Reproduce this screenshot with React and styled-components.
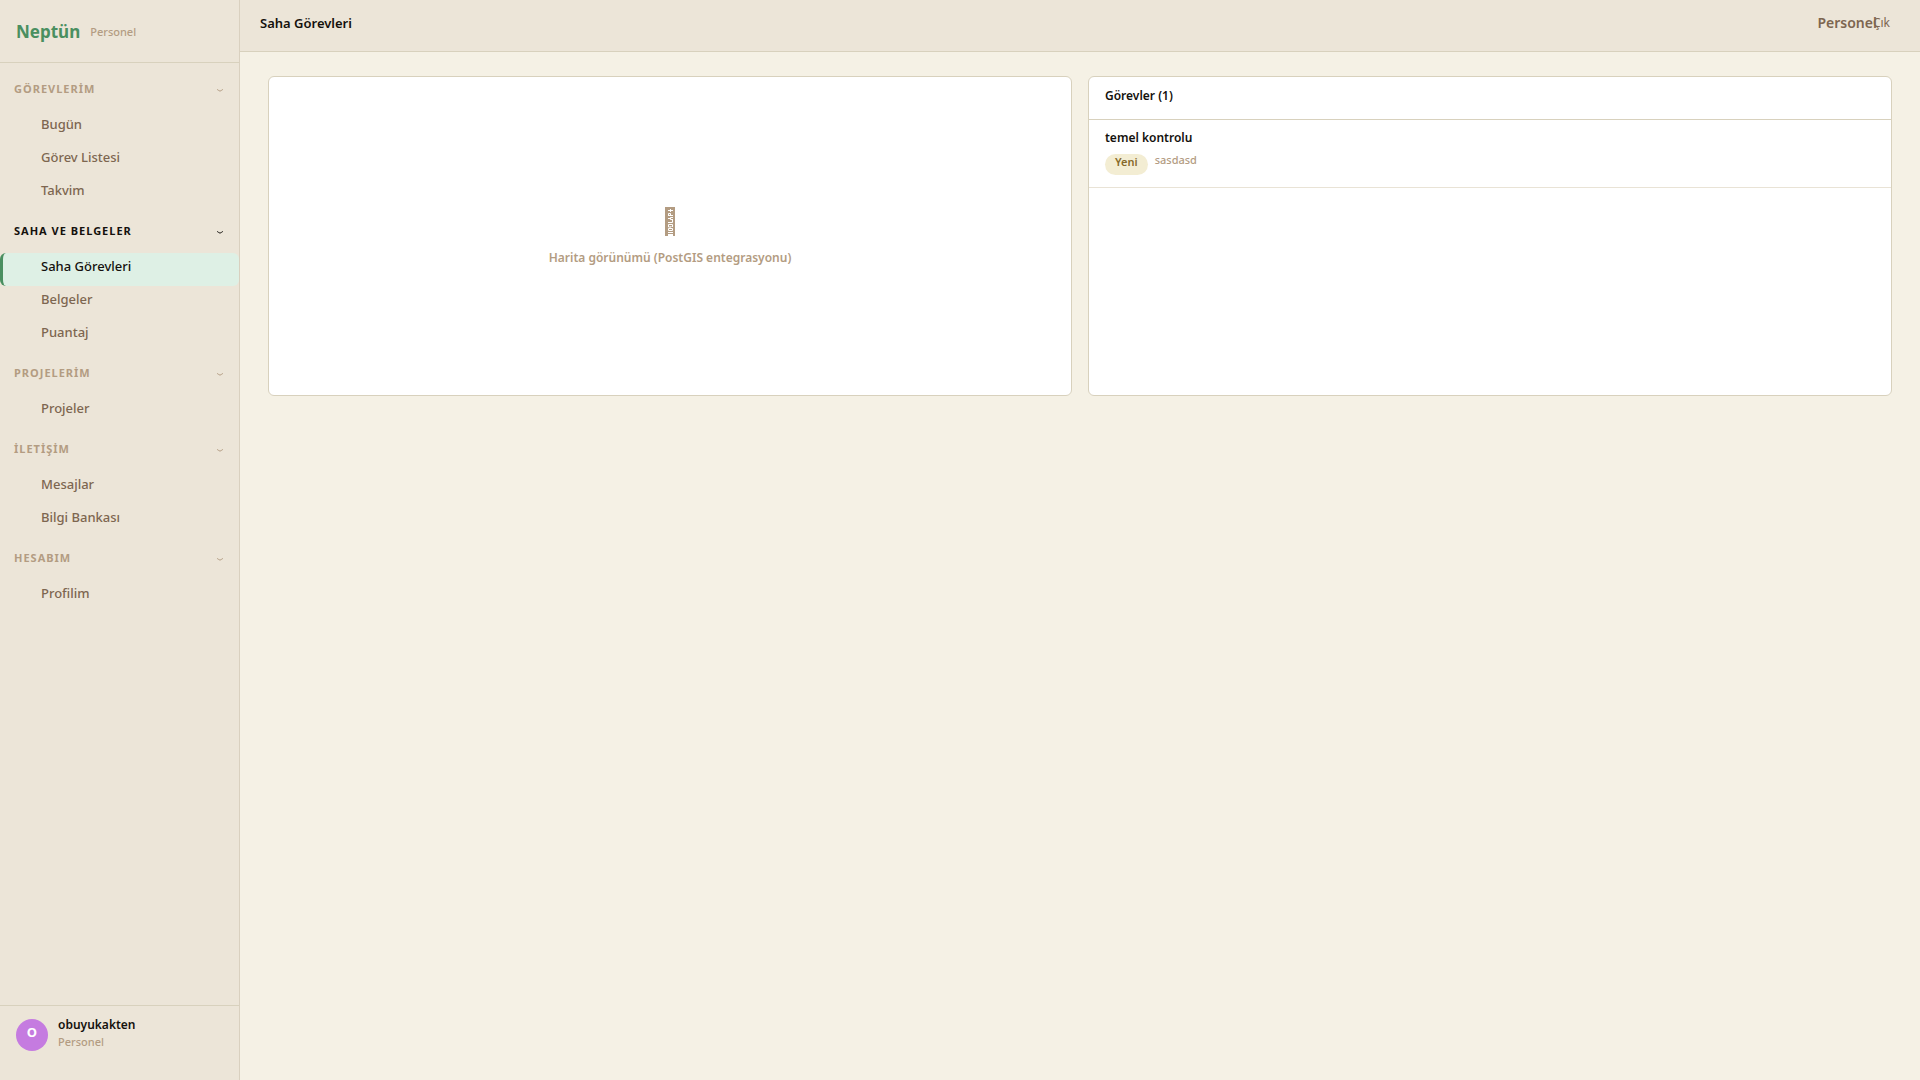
import React, { useState } from 'react';
import styled, { createGlobalStyle } from 'styled-components';

const GlobalStyle = createGlobalStyle`
    * {
        box-sizing: border-box;
    }
    body {
        margin: 0;
        background: #f5f1e5;
        color: #14110d;
        font-family: 'Noto Sans', 'Open Sans', sans-serif;
        font-size: 13px;
        line-height: 20px;
    }
    button {
        font-family: inherit;
        border: 0;
        background: none;
        cursor: pointer;
    }
    h1, h2, h3, p, ul {
        margin: 0;
        padding: 0;
    }
`;
const Layout = styled.div`
    display: flex;
    min-height: 100vh;
`;
const Sidebar = styled.aside`
    display: flex;
    flex-direction: column;
    width: 240px;
    flex-shrink: 0;
    background: #ece5d8;
    border-right: 1px solid #d9d0bf;
`;
const Brand = styled.div`
    display: flex;
    align-items: center;
    gap: 10px;
    height: 63px;
    padding: 2px 16px 0;
    border-bottom: 1px solid #d8d1bd;
`;
const BrandName = styled.span`
    color: #4a8f60;
    font-size: 17px;
    font-weight: 700;
`;
const BrandRole = styled.span`
    color: #b39c82;
    font-size: 11px;
    font-weight: 500;
`;
const Nav = styled.nav`
    flex: 1;
    padding-top: 9px;
`;
const GroupButton = styled.button`
    display: flex;
    align-items: center;
    justify-content: space-between;
    width: 100%;
    height: 32px;
    padding: 0 15px 0 14px;
    color: ${props => props.$active ? '#14110d' : '#b39c82'};
    font-size: 11px;
    font-weight: 700;
    letter-spacing: 1px;
`;
const GroupList = styled.ul`
    list-style: none;
    padding: 7px 0 4px;
`;
const NavLink = styled.a`
    display: block;
    height: 33px;
    padding: 3px 0 10px 38px;
    border-left: 3px solid ${props => props.$active ? '#4a8f60' : 'transparent'};
    border-radius: 6px;
    background: ${props => props.$active ? '#def0e5' : 'transparent'};
    color: ${props => props.$active ? '#14110d' : '#7d6650'};
    font-weight: 500;
    text-decoration: none;
`;
const UserBox = styled.div`
    display: flex;
    gap: 10px;
    height: 75px;
    padding: 13px 16px;
    border-top: 1px solid #d8d1bd;
`;
const Avatar = styled.div`
    width: 32px;
    height: 32px;
    padding-top: 3px;
    border-radius: 50%;
    background: #c57be0;
    color: #fff;
    font-weight: 700;
    text-align: center;
`;
const UserName = styled.p`
    font-size: 12px;
    font-weight: 600;
    line-height: 12px;
`;
const UserRole = styled.p`
    color: #b39c82;
    font-size: 11px;
    font-weight: 500;
    line-height: 22px;
`;
const Main = styled.main`
    flex: 1;
    min-width: 0;
`;
const Header = styled.header`
    display: flex;
    align-items: center;
    justify-content: space-between;
    height: 52px;
    padding: 0 30px 5px 20px;
    background: #ece5d8;
    border-bottom: 1px solid #d8d1bd;
`;
const Title = styled.h1`
    font-size: 13px;
    font-weight: 600;
`;
const HeaderRight = styled.div`
    display: flex;
    align-items: center;
    color: #7d6650;
`;
const RoleName = styled.span`
    font-size: 14px;
    font-weight: 600;
`;
const LogoutButton = styled.button`
    margin-left: -4px;
    padding: 0;
    color: #7d6650;
    font-size: 12px;
    line-height: 20px;
`;
const Content = styled.div`
    display: grid;
    grid-template-columns: 1fr 1fr;
    gap: 16px;
    padding: 24px 28px;
`;
const Card = styled.section`
    min-height: 320px;
    background: #fff;
    border: 1px solid #d8d1bd;
    border-radius: 6px;
`;
const MapCard = styled(Card)`
    display: flex;
    flex-direction: column;
    align-items: center;
    justify-content: center;
    gap: 12px;
    padding-top: 3px;
    color: #b39c82;
    font-size: 12px;
    font-weight: 600;
`;
const CardTitle = styled.h2`
    height: 43px;
    padding: 9px 16px;
    border-bottom: 1px solid #d8d1bd;
    font-size: 12px;
    font-weight: 600;
`;
const Task = styled.article`
    height: 68px;
    padding: 8px 16px;
    border-bottom: 1px solid #e9e3d6;
`;
const TaskName = styled.h3`
    font-size: 12px;
    font-weight: 600;
`;
const TaskMeta = styled.div`
    display: flex;
    gap: 7px;
    padding-top: 6px;
    font-size: 11px;
    line-height: 16px;
`;
const Badge = styled.span`
    height: 21px;
    padding: 0 10px;
    border-radius: 11px;
    background: #f3edd3;
    color: #86692a;
    font-weight: 600;
`;
const TaskNote = styled.span`
    color: #b39c82;
    font-weight: 500;
    line-height: 12px;
`;

const groups = [
    { title: 'GÖREVLERİM', items: ['Bugün', 'Görev Listesi', 'Takvim'] },
    { title: 'SAHA VE BELGELER', items: ['Saha Görevleri', 'Belgeler', 'Puantaj'] },
    { title: 'PROJELERİM', items: ['Projeler'] },
    { title: 'İLETİŞİM', items: ['Mesajlar', 'Bilgi Bankası'] },
    { title: 'HESABIM', items: ['Profilim'] },
];

const Chevron = () => (
    <svg width="8" height="8" viewBox="0 0 8 8" fill="none" stroke="currentColor">
        <path d="M1 5.5C2 5.5 2.6 7 4 7S6 5.5 7 5.5" />
    </svg>
)

const MapGlyph = () => (
    <svg width="10" height="29" viewBox="0 0 10 29">
        <path fill="#b39c82" d="M0 0h10v29H8v-2H3v2H0z" />
        <path
            fill="none"
            stroke="#fff"
            d="M5.5 2v3M3 3.5h5M3.5 9V6.5h2V9M3 8.5h5M3 11.5h2.5M5.5 10.5H8M5.5 10.5v2H8M7.5 13v2.5H3M7.5 20v-2.5h-4V20H6v-1M3.5 21.5h4v2h-4zM3 25.5h5"
        />
    </svg>
)

const App = () => {

    const [ current, setCurrent ] = useState('Saha Görevleri')
    const [ closed, setClosed ] = useState([])

    const toggleGroup = title => {
        setClosed(closed.includes(title) ? closed.filter(t => t !== title) : [...closed, title])
    }
    const openPage = (e, item) => {
        e.preventDefault();
        setCurrent(item)
    }

    return (
        <Layout>
            <GlobalStyle />
            <Sidebar>
                <Brand>
                    <BrandName>Neptün</BrandName>
                    <BrandRole>Personel</BrandRole>
                </Brand>
                <Nav>
                    {groups.map(group => (
                        <div key={group.title}>
                            <GroupButton
                                $active={group.items.includes(current)}
                                aria-expanded={!closed.includes(group.title)}
                                onClick={() => toggleGroup(group.title)}
                            >
                                {group.title}
                                <Chevron />
                            </GroupButton>
                            {!closed.includes(group.title) && (
                                <GroupList>
                                    {group.items.map(item => (
                                        <li key={item}>
                                            <NavLink href="#" $active={item === current} onClick={e => openPage(e, item)}>
                                                {item}
                                            </NavLink>
                                        </li>
                                    ))}
                                </GroupList>
                            )}
                        </div>
                    ))}
                </Nav>
                <UserBox>
                    <Avatar>O</Avatar>
                    <div>
                        <UserName>obuyukakten</UserName>
                        <UserRole>Personel</UserRole>
                    </div>
                </UserBox>
            </Sidebar>
            <Main>
                <Header>
                    <Title>Saha Görevleri</Title>
                    <HeaderRight>
                        <RoleName>Personel</RoleName>
                        <LogoutButton>Çık</LogoutButton>
                    </HeaderRight>
                </Header>
                <Content>
                    <MapCard>
                        <MapGlyph />
                        <p>Harita görünümü (PostGIS entegrasyonu)</p>
                    </MapCard>
                    <Card>
                        <CardTitle>Görevler (1)</CardTitle>
                        <Task>
                            <TaskName>temel kontrolu</TaskName>
                            <TaskMeta>
                                <Badge>Yeni</Badge>
                                <TaskNote>sasdasd</TaskNote>
                            </TaskMeta>
                        </Task>
                    </Card>
                </Content>
            </Main>
        </Layout>
    )
}

export default App;
